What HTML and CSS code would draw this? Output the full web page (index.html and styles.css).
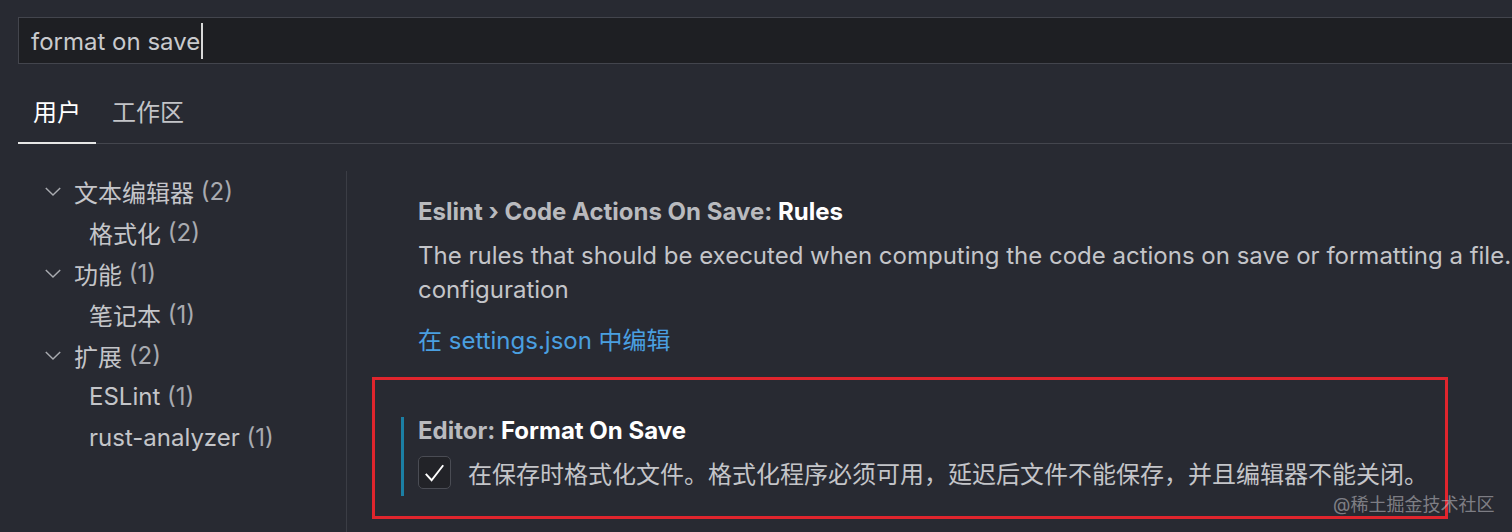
FILE: index.html
```html
<!DOCTYPE html>
<html lang="zh-CN">
<head>
<meta charset="utf-8">
<title>Settings</title>
<link rel="stylesheet" href="styles.css">
</head>
<body>
<div class="search"><span class="query">format on save</span><span class="caret"></span></div>
<div class="tabs">
  <div class="tab active">用户</div>
  <div class="tab">工作区</div>
</div>
<div class="main">
  <div class="sidebar">
    <div class="row l1"><svg class="chev" viewBox="0 0 20 12"><path d="M2 2 L10 10 L18 2" fill="none" stroke="#a9abb0" stroke-width="1.6"/></svg>文本编辑器 <span class="cnt">(2)</span></div>
    <div class="row l2">格式化 <span class="cnt">(2)</span></div>
    <div class="row l1"><svg class="chev" viewBox="0 0 20 12"><path d="M2 2 L10 10 L18 2" fill="none" stroke="#a9abb0" stroke-width="1.6"/></svg>功能 <span class="cnt">(1)</span></div>
    <div class="row l2">笔记本 <span class="cnt">(1)</span></div>
    <div class="row l1"><svg class="chev" viewBox="0 0 20 12"><path d="M2 2 L10 10 L18 2" fill="none" stroke="#a9abb0" stroke-width="1.6"/></svg>扩展 <span class="cnt">(2)</span></div>
    <div class="row l2">ESLint <span class="cnt">(1)</span></div>
    <div class="row l2">rust-analyzer <span class="cnt">(1)</span></div>
  </div>
  <div class="content">
    <div class="item first">
      <div class="title"><span class="cat">Eslint › Code Actions On Save: </span><span class="name">Rules</span></div>
      <div class="desc">The rules that should be executed when computing the code actions on save or formatting a file. These rules override the configuration</div>
      <div class="link">在 settings.json 中编辑</div>
    </div>
    <div class="highlight">
      <div class="item focused">
        <div class="title"><span class="cat">Editor: </span><span class="name">Format On Save</span></div>
        <div class="check-row">
          <span class="checkbox"><svg viewBox="0 0 32 32"><path d="M7 17.5 L13 24 L25 8.5" fill="none" stroke="#ffffff" stroke-width="2"/></svg></span>
          <span class="cdesc">在保存时格式化文件。格式化程序必须可用，延迟后文件不能保存，并且编辑器不能关闭。</span>
        </div>
      </div>
    </div>
  </div>
</div>
<div class="watermark">@稀土掘金技术社区</div>
</body>
</html>
```
FILE: styles.css
```css
html, body {
  margin: 0;
  padding: 0;
}
body {
  background: #282a32;
  width: 1512px;
  height: 532px;
  overflow: hidden;
  position: relative;
  font-family: "Inter", "Noto Sans CJK SC", sans-serif;
  font-size: 24px;
  color: #c4c5c9;
}
.search {
  margin: 17px 0 0 18px;
  height: 45px;
  border: 1px solid #43454d;
  border-right: none;
  background: #1e1f23;
  display: flex;
  align-items: center;
  padding-left: 12px;
  color: #c9cacd;
  font-size: 24px;
}
.query {
  position: relative;
  top: 1px;
}
.caret {
  display: inline-block;
  width: 2px;
  height: 36px;
  background: #d8d8d8;
  margin-left: 1px;
}
.tabs {
  margin: 0 0 0 18px;
  height: 79px;
  display: flex;
  align-items: stretch;
  border-bottom: 1px solid #44464e;
}
.tab {
  display: flex;
  align-items: center;
  padding: 14px 15px 0 15px;
  color: #c3c4c8;
  font-size: 24px;
  white-space: nowrap;
  flex: none;
  box-sizing: border-box;
}
.tab.active {
  color: #ffffff;
  border-bottom: 2px solid #e6e6e6;
  margin-bottom: -1px;
  margin-right: 1px;
}
.main {
  display: flex;
  margin-top: 27px;
}
.sidebar {
  width: 346px;
  flex: none;
}
.row {
  height: 41px;
  display: flex;
  align-items: center;
  white-space: pre;
  color: #c4c5c9;
}
.row.l1 {
  padding-left: 44px;
}
.row.l2 {
  padding-left: 89px;
}
.chev {
  width: 18px;
  height: 11px;
  margin-right: 12px;
}
.cnt {
  color: #a8aab0;
}
.content {
  flex: 1;
  border-left: 1px solid #3b3d45;
  height: 400px;
  padding-left: 25px;
}
.item {
  padding-left: 46px;
}
.item.first {
  padding-top: 24px;
  padding-bottom: 18px;
}
.title {
  font-weight: 700;
  line-height: 34px;
  white-space: nowrap;
}
.cat {
  color: #b9babe;
}
.name {
  color: #ffffff;
}
.desc {
  line-height: 34px;
  margin-top: 10px;
  color: #c4c5c9;
  width: 1400px;
}
.link {
  margin-top: 17px;
  color: #4a9fe0;
  line-height: 34px;
}
.highlight {
  width: 1076px;
  height: 142px;
  border: 3px solid #e0252d;
  box-sizing: border-box;
  padding-top: 39px;
  margin-top: 1px;
}
.item.focused {
  margin-left: 26px;
  padding-left: 14px;
  border-left: 3px solid #1b7fa4;
  height: 79px;
}
.item.focused .title {
  line-height: 28px;
  margin-top: -2px;
}
.check-row {
  display: flex;
  align-items: center;
  margin-top: 10px;
}
.checkbox {
  width: 31px;
  height: 31px;
  border: 1px solid #4a4c54;
  border-radius: 5px;
  background: #222328;
  display: inline-flex;
  flex: none;
}
.checkbox svg {
  width: 31px;
  height: 31px;
}
.cdesc {
  margin-left: 17px;
  white-space: nowrap;
  color: #c4c5c9;
}
.watermark {
  position: absolute;
  left: 1333px;
  top: 490px;
  font-size: 18px;
  color: rgba(200, 200, 205, 0.55);
  white-space: nowrap;
}
```
